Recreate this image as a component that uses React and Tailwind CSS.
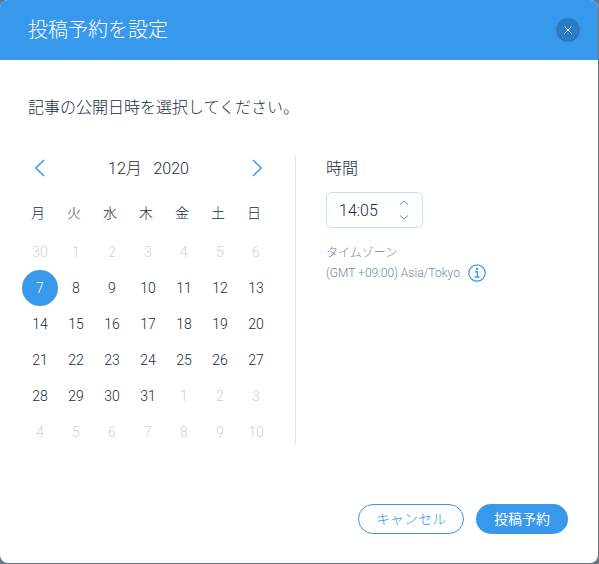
import React from "react";

const weeks = [
  [["30",1],["1",1],["2",1],["3",1],["4",1],["5",1],["6",1]],
  [["7",2],["8"],["9"],["10"],["11"],["12"],["13"]],
  [["14"],["15"],["16"],["17"],["18"],["19"],["20"]],
  [["21"],["22"],["23"],["24"],["25"],["26"],["27"]],
  [["28"],["29"],["30"],["31"],["1",1],["2",1],["3",1]],
  [["4",1],["5",1],["6",1],["7",1],["8",1],["9",1],["10",1]],
];
const days = ["月","火","水","木","金","土","日"];

function Chevron({ dir }) {
  return (
    <svg width="12" height="18" viewBox="0 0 12 18" fill="none" stroke="#3899ec" strokeWidth="1.5">
      {dir === "left" ? <path d="M10 1 1.8 9l8.2 8" /> : <path d="M2 1l8.2 8L2 17" />}
    </svg>
  );
}

export default function App() {
  return (
    <div className="w-[599px] h-[564px] bg-[#6b7680] overflow-hidden font-['Roboto','Noto_Sans_CJK_JP',sans-serif] text-[#162d3d]">
      <div className="w-[598px] h-[563px] bg-white rounded-[8px] overflow-hidden flex flex-col">
        <div className="h-[60px] bg-[#3899ec] flex items-center justify-between pl-[28px] pr-[18px] shrink-0">
          <div className="text-white text-[20px] font-light leading-[24px] -mt-[1px]">投稿予約を設定</div>
          <div className="w-[24px] h-[24px] rounded-full bg-[#2b7cc4] flex items-center justify-center">
            <svg width="8" height="8" viewBox="0 0 8 8" stroke="#fff" strokeWidth="1"><path d="M.5.5l7 7M7.5.5l-7 7" /></svg>
          </div>
        </div>

        <div className="pl-[28px] pt-[37px] text-[16px] font-light leading-[22px] h-[96px] shrink-0">記事の公開日時を選択してください。</div>

        <div className="flex h-[288px] shrink-0">
          <div className="w-[252px] ml-[22px]">
            <div className="flex items-center justify-between h-[24px] pl-[12px] pr-[11px]">
              <Chevron dir="left" />
              <div className="text-[16px] font-light whitespace-pre pt-[2px]">12月   2020</div>
              <Chevron dir="right" />
            </div>
            <div className="grid grid-cols-7 h-[36px] mt-[15px] mb-[3px] pr-[2px] -ml-[2px] items-center text-center text-[14px] font-light">
              {days.map((d) => <div key={d}>{d}</div>)}
            </div>
            {weeks.map((w, i) => (
              <div key={i} className="grid grid-cols-7 h-[36px] items-center justify-items-center text-[14px] font-light">
                {w.map(([n, k], j) => (
                  <div
                    key={j}
                    className={
                      k === 2
                        ? "w-[36px] h-[36px] rounded-full bg-[#3899ec] text-white flex items-center justify-center"
                        : k === 1
                        ? "text-[#cbd3dc]"
                        : ""
                    }
                  >
                    {n}
                  </div>
                ))}
              </div>
            ))}
          </div>

          <div className="w-px bg-[#dfe5eb] ml-[21px]" />

          <div className="ml-[30px] flex flex-col">
            <div className="text-[16px] font-light leading-[24px] pt-[1px] h-[24px]">時間</div>
            <div className="mt-[12px] w-[97px] h-[36px] border border-[#c2e3fc] rounded-[6px] flex items-center justify-between pl-[12px] pr-[13px]">
              <span className="text-[16px] font-light pt-[2px]">14:05</span>
              <svg width="10" height="22" viewBox="0 0 10 22" fill="none" stroke="#3899ec" strokeWidth="1">
                <path d="M1 5.5 5 2l4 3.5M1 16.5 5 20l4-3.5" />
              </svg>
            </div>
            <div className="mt-[15px] text-[12px] font-light leading-[20px] text-[#6f889c]">タイムゾーン</div>
            <div className="flex items-center text-[12px] font-light leading-[20px] text-[#6f889c]">
              <span>(GMT +09:00) Asia/Tokyo</span>
              <svg className="ml-[8px]" width="18" height="18" viewBox="0 0 18 18" fill="none">
                <circle cx="9" cy="9" r="8.2" stroke="#3899ec" strokeWidth="1.2" />
                <path d="M7.2 7.8h2.2v5M6.8 13h4.6" stroke="#3899ec" strokeWidth="1.4" />
                <circle cx="9" cy="5" r="1.2" fill="#3899ec" />
              </svg>
            </div>
          </div>
        </div>

        <div className="flex justify-end gap-[12px] pr-[30px] mt-[60px]">
          <div className="w-[106px] h-[30px] rounded-full border border-[#3899ec] text-[#3899ec] text-[14px] font-light flex items-center justify-center">キャンセル</div>
          <div className="w-[92px] h-[30px] rounded-full bg-[#3899ec] text-white text-[14px] font-normal flex items-center justify-center">投稿予約</div>
        </div>
      </div>
    </div>
  );
}
